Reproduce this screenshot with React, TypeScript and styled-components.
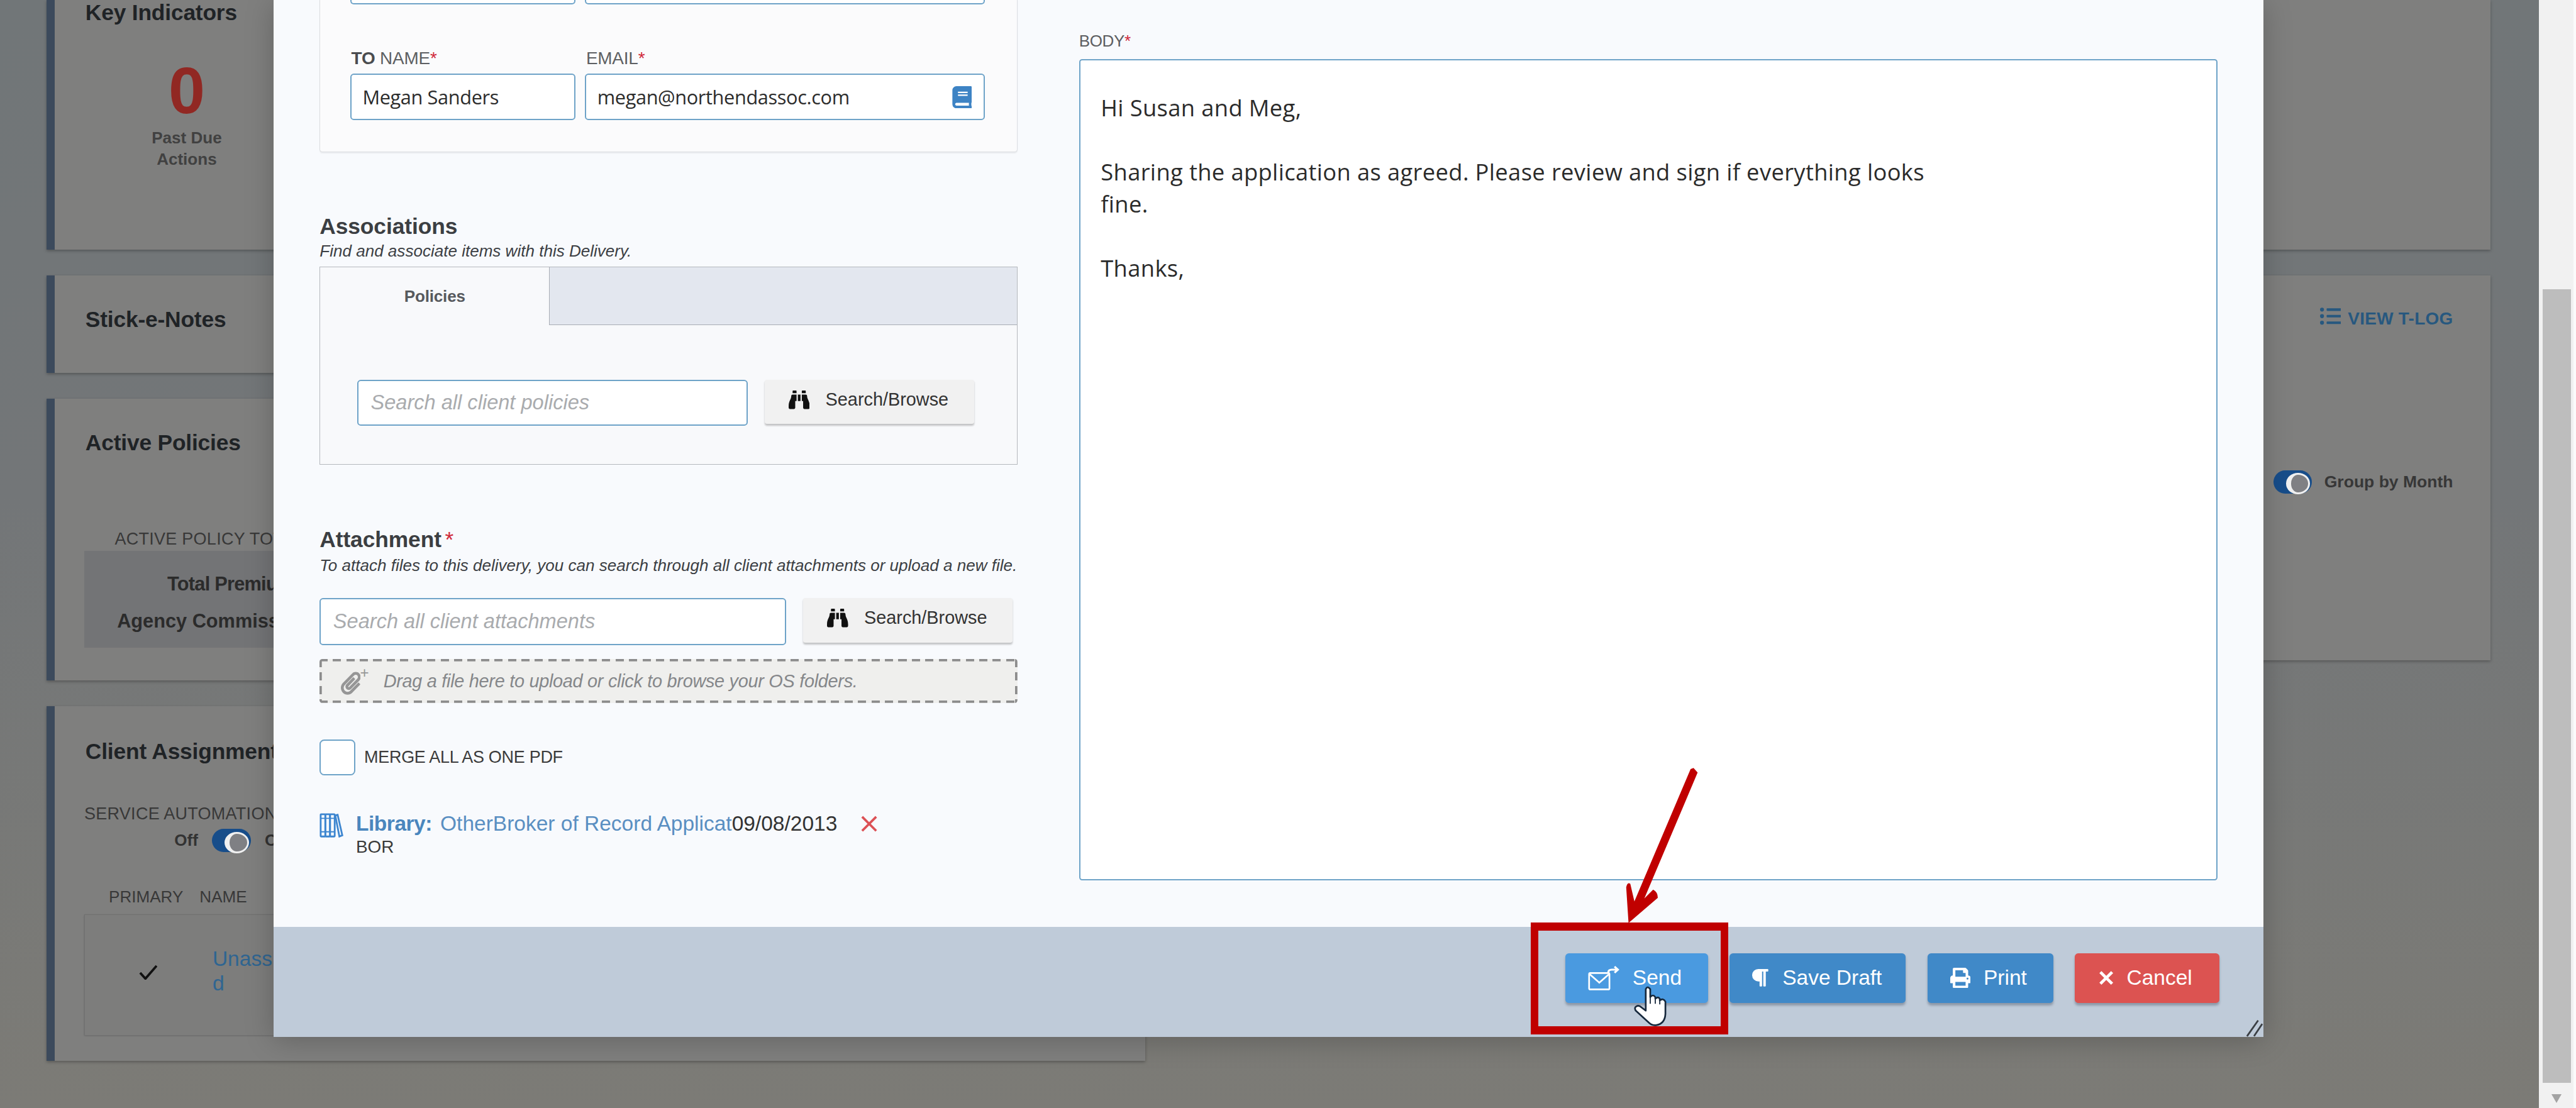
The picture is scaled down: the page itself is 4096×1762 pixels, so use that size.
import React from 'react'
import styled, { createGlobalStyle } from 'styled-components'
import { FaBinoculars, FaBook, FaListUl, FaParagraph, FaPaperclip, FaPrint } from 'react-icons/fa'

const GlobalStyle = createGlobalStyle`
  html, body { margin: 0; padding: 0; overflow: hidden; background: #7b7b77; }
  * { box-sizing: border-box; }
`

const SANS = `"Liberation Sans", Arial, sans-serif`
const BODY_FONT = `"Open Sans", "Noto Sans", sans-serif`
const DASH_X = `repeating-linear-gradient(90deg, #8c8c8c 0 14px, transparent 14px 23px)`
const DASH_Y = `repeating-linear-gradient(180deg, #8c8c8c 0 14px, transparent 14px 23px)`

const Screen = styled.div`
  zoom: 0.93091;
  width: 4400px;
  height: 1893px;
  display: flex;
  overflow: hidden;
  font-family: ${SANS};
`
const Page = styled.div`
  position: relative;
  width: 4337px;
  height: 100%;
  padding-left: 80px;
  display: flex;
  gap: 44px;
  align-items: flex-start;
  background: linear-gradient(180deg, #717678 0%, #737678 45%, #7c7b76 100%);
`
const Column = styled.div<{ $w: number }>`
  width: ${(p) => p.$w}px;
  display: flex;
  flex-direction: column;
  gap: 44px;
`
const Card = styled.section<{ $h: number; $accent?: boolean }>`
  height: ${(p) => p.$h}px;
  background: #7f7f7e;
  border-left: ${(p) => (p.$accent ? '14px solid #3c4a5c' : '0')};
  box-shadow: 0 2px 5px rgba(0, 0, 0, 0.28);
  padding-left: 50px;
  overflow: hidden;
`
const CardTitle = styled.h3<{ $top: number }>`
  margin: ${(p) => p.$top}px 0 0 2px;
  font-size: 38px;
  line-height: 44px;
  font-weight: 700;
  letter-spacing: -0.2px;
  color: #1f2326;
`
const Metric = styled.div`
  width: 250px;
  margin: 52px 0 0 50px;
  display: flex;
  flex-direction: column;
  align-items: center;
`
const MetricValue = styled.div`
  font-size: 112px;
  line-height: 120px;
  font-weight: 700;
  color: #912823;
`
const MetricLabel = styled.div`
  margin-top: 1px;
  font-size: 28px;
  line-height: 37px;
  font-weight: 700;
  text-align: center;
  color: #414141;
`
const MutedCaps = styled.div<{ $top: number; $left?: number }>`
  margin: ${(p) => p.$top}px 0 0 ${(p) => p.$left ?? 0}px;
  font-size: 29px;
  line-height: 34px;
  letter-spacing: 0.3px;
  color: #383838;
  white-space: nowrap;
`
const TotalsBox = styled.div`
  margin-top: 2px;
  width: 900px;
  height: 165px;
  padding: 26px 0 0 56px;
  background: #737476;
`
const TotalsLabel = styled.div`
  width: 330px;
  text-align: right;
  font-size: 33px;
  line-height: 63px;
  font-weight: 700;
  color: #2b2b2b;
  white-space: nowrap;
`
const TotalsTop = styled(TotalsLabel)`
  letter-spacing: -0.8px;
`
const ToggleRow = styled.div`
  margin: 8px 0 0 154px;
  display: flex;
  align-items: center;
  gap: 24px;
  font-size: 28px;
  font-weight: 700;
  color: #333;
`
const Toggle = styled.span`
  position: relative;
  display: inline-block;
  width: 66px;
  height: 40px;
  border-radius: 20px;
  background: #174d8a;

  &::after {
    content: '';
    position: absolute;
    right: 3px;
    top: 5px;
    width: 30px;
    height: 30px;
    border-radius: 50%;
    border: 4px solid #f0f0f0;
    border-left-width: 9px;
    background: #7f8084;
  }
`
const AssignHead = styled.div`
  margin: 60px 0 0 42px;
  display: flex;
  gap: 28px;
  font-size: 28px;
  line-height: 34px;
  letter-spacing: 0;
  color: #383838;
`
const AssignRow = styled.div`
  margin-top: 12px;
  width: 1200px;
  height: 207px;
  border: 1px solid #707070;
  background: #7d7d7c;
  box-shadow: 0 1px 3px rgba(0, 0, 0, 0.18);
  display: flex;
  align-items: flex-start;
`
const AssignCheck = styled.svg`
  width: 32px;
  height: 26px;
  margin: 85px 0 0 92px;
`
const AssignName = styled.div`
  width: 175px;
  margin: 54px 0 0 94px;
  font-size: 36px;
  line-height: 42px;
  color: #2f6591;
  word-break: break-all;
`
const RightTools = styled.div<{ $top: number }>`
  margin-top: ${(p) => p.$top}px;
  padding-right: 64px;
  display: flex;
  justify-content: flex-end;
  align-items: center;
`
const TLog = styled.span`
  display: flex;
  align-items: center;
  gap: 12px;
  font-size: 30px;
  font-weight: 700;
  letter-spacing: 0.3px;
  color: #27587f;

  svg {
    width: 36px;
    height: 36px;
    margin-top: -10px;
  }
`
const GroupToggle = styled.span`
  margin-left: 21px;
  font-size: 28.5px;
  font-weight: 700;
  color: #373737;
`
const Scrollbar = styled.aside`
  width: 63px;
  height: 100%;
  padding-left: 6px;
  border-right: 5px solid #fbfbfb;
  background: #f1f1f1;
  display: flex;
  flex-direction: column;
`
const ScrollThumb = styled.div`
  margin-top: 494px;
  width: 48px;
  height: 1356px;
  background: #bdbdbd;
`
const ScrollArrow = styled.div`
  margin: 19px 0 0 15px;
  width: 0;
  height: 0;
  border-left: 9px solid transparent;
  border-right: 9px solid transparent;
  border-top: 16px solid #a3a3a3;
`

const Modal = styled.div`
  position: absolute;
  left: 467px;
  top: 0;
  width: 3399px;
  height: 1771px;
  display: flex;
  flex-direction: column;
  background: #f8fafd;
  box-shadow: 0 6px 46px rgba(0, 0, 0, 0.22);
`
const ModalBody = styled.div`
  flex: 1;
  padding: 0 78px 0 79px;
  display: grid;
  grid-template-columns: 1192px 1945px;
  column-gap: 105px;
  overflow: hidden;
`
const LeftPane = styled.div`
  display: flex;
  flex-direction: column;
  align-items: flex-start;
`
const RecipientPanel = styled.div`
  width: 1192px;
  height: 260px;
  padding: 0 53px 0 51px;
  background: #fbfbfc;
  border: 2px solid #dcdee2;
  border-top: 0;
  border-radius: 0 0 5px 5px;
  box-shadow: 0 2px 2px rgba(0, 0, 0, 0.06);
`
const FieldRow = styled.div`
  display: grid;
  grid-template-columns: 385px 683px;
  column-gap: 16px;
`
const CroppedInput = styled.div`
  height: 8px;
  background: #fff;
  border: 3px solid #6ea3c8;
  border-top: 0;
  border-radius: 0 0 6px 6px;
`
const FieldLabel = styled.label`
  display: block;
  margin: 77px 0 10px 0;
  padding-left: 2px;
  font-size: 30px;
  line-height: 31px;
  letter-spacing: -0.2px;
  color: #5d5f62;

  b {
    color: #4a4c4f;
  }
  i {
    font-style: normal;
    color: #d0293b;
  }
`
const TextField = styled.div`
  position: relative;
  height: 79px;
  padding: 0 19px;
  display: flex;
  align-items: center;
  background: #fff;
  border: 3px solid #6ea3c8;
  border-radius: 6px;
  font-family: ${BODY_FONT};
  font-size: 33px;
  letter-spacing: -0.4px;
  color: #2c2c2c;
`
const BookIcon = styled(FaBook)`
  position: absolute;
  right: 20px;
  top: 19px;
  width: 34px;
  height: 38px;
  color: #3d83c4;
`
const SectionTitle = styled.h2<{ $top: number }>`
  margin: ${(p) => p.$top}px 0 0;
  font-size: 38px;
  line-height: 44px;
  font-weight: 700;
  letter-spacing: -0.1px;
  color: #3b3e42;

  i {
    margin-left: 6px;
    font-weight: 400;
    font-style: normal;
    color: #d0293b;
  }
`
const Hint = styled.p<{ $top: number }>`
  margin: ${(p) => p.$top}px 0 0;
  font-size: 28px;
  line-height: 30px;
  font-style: italic;
  color: #3c3f44;
  white-space: nowrap;
`
const TabBox = styled.div`
  margin-top: 11px;
  width: 1192px;
  height: 338px;
  background: #f8f9fb;
  border: 2px solid #b5b8bd;
`
const TabStrip = styled.div`
  height: 98px;
  display: flex;
  background: #e3e7ef;
`
const ActiveTab = styled.div`
  width: 391px;
  height: 98px;
  display: flex;
  align-items: center;
  justify-content: center;
  background: #f8f9fb;
  font-size: 28px;
  font-weight: 700;
  letter-spacing: -0.2px;
  color: #575a5e;
`
const TabEdge = styled.div`
  flex: 1;
  border-left: 2px solid #a9adb4;
  border-bottom: 2px solid #a9adb4;
`
const TabPanel = styled.div`
  padding: 94px 0 0 63px;
`
const SearchRow = styled.div<{ $top?: number }>`
  margin-top: ${(p) => p.$top ?? 0}px;
  display: flex;
  gap: 29px;
`
const SearchInput = styled.div<{ $w: number; $h: number }>`
  width: ${(p) => p.$w}px;
  height: ${(p) => p.$h}px;
  padding-left: 21px;
  display: flex;
  align-items: center;
  background: #fff;
  border: 3px solid #6ea3c8;
  border-radius: 6px;
  font-size: 35px;
  font-style: italic;
  color: #a9abae;
`
const BrowseButton = styled.button<{ $h: number }>`
  width: 358px;
  height: ${(p) => p.$h}px;
  padding: 0 0 8px 41px;
  display: flex;
  align-items: center;
  gap: 27px;
  border: 0;
  border-radius: 4px;
  background: #f1f1f1;
  box-shadow: 0 3px 3px rgba(0, 0, 0, 0.22);
  font-family: ${SANS};
  font-size: 31px;
  color: #333;

  svg {
    width: 36px;
    height: 36px;
    color: #111;
  }
`
const DropZone = styled.div`
  margin-top: 24px;
  width: 1192px;
  height: 75px;
  padding-left: 36px;
  display: flex;
  align-items: center;
  background-color: #efefed;
  background-image: ${DASH_X}, ${DASH_X}, ${DASH_Y}, ${DASH_Y};
  background-size: 100% 4px, 100% 4px, 4px 100%, 4px 100%;
  background-position: top, bottom, left, right;
  background-repeat: no-repeat;
  border-radius: 5px;
  font-size: 31px;
  font-style: italic;
  letter-spacing: -0.3px;
  color: #85878a;
`
const ClipIcon = styled.span`
  position: relative;
  width: 46px;
  height: 44px;
  margin-right: 27px;
  color: #969696;

  svg {
    width: 34px;
    height: 40px;
    margin-top: 6px;
  }
  i {
    position: absolute;
    left: 33px;
    top: -7px;
    font-size: 26px;
    font-style: normal;
  }
`
const MergeRow = styled.label`
  margin-top: 62px;
  display: flex;
  align-items: center;
  gap: 15px;
  font-size: 29px;
  letter-spacing: -0.3px;
  color: #3b3b3b;
`
const CheckBox = styled.span`
  width: 61px;
  height: 62px;
  background: #fff;
  border: 3px solid #6ea3c8;
  border-radius: 8px;
`
const FileRow = styled.div`
  margin-top: 62px;
  display: flex;
  gap: 22px;
`
const ShelfIcon = styled.svg`
  width: 40px;
  height: 42px;
  margin-top: 2px;
`
const FileText = styled.div`
  font-size: 36px;
  line-height: 40px;
  color: #333;
`
const FileLine = styled.div`
  display: flex;
  align-items: center;
`
const FileSource = styled.b`
  margin-right: 14px;
  letter-spacing: -0.5px;
  color: #4a86bd;
`
const FileName = styled.span`
  color: #5a8fc2;
`
const FileSub = styled.div`
  margin-top: 0;
  font-size: 30px;
  color: #3a3a3a;
`
const RemoveIcon = styled.svg`
  margin-left: 40px;
  width: 28px;
  height: 28px;
`
const RightPane = styled.div`
  padding-top: 56px;
`
const BodyLabel = styled.label`
  display: block;
  margin-bottom: 15px;
  font-size: 28px;
  line-height: 30px;
  letter-spacing: -0.4px;
  color: #5d5f62;

  i {
    font-style: normal;
    color: #d0293b;
  }
`
const BodyText = styled.div`
  height: 1403px;
  padding: 54px 35px;
  background: #fff;
  border: 3px solid #6ea3c8;
  border-radius: 5px;
  font-family: ${BODY_FONT};
  font-size: 39px;
  line-height: 54.7px;
  letter-spacing: 0.4px;
  white-space: pre-line;
  color: #2b2b2b;
`
const ModalFooter = styled.footer`
  position: relative;
  height: 188px;
  padding: 45px 75px 0 0;
  display: flex;
  justify-content: flex-end;
  align-items: flex-start;
  gap: 37px;
  background: #bfcbd9;
`
const ActionButton = styled.button<{ $w: number; $bg: string }>`
  width: ${(p) => p.$w}px;
  height: 85px;
  padding: 0 6px 0 0;
  display: flex;
  align-items: center;
  justify-content: center;
  gap: 22px;
  border: 0;
  border-radius: 6px;
  background: ${(p) => p.$bg};
  box-shadow: 0 4px 4px rgba(60, 70, 90, 0.38);
  font-family: ${SANS};
  font-size: 36px;
  color: #fff;

  svg {
    flex: none;
  }
`
const ResizeGrip = styled.svg`
  position: absolute;
  right: 0;
  bottom: 0;
  width: 30px;
  height: 32px;
`
const Annotation = styled.svg`
  position: absolute;
  left: 2760px;
  top: 1300px;
  width: 150px;
  height: 280px;
`
const RedFrame = styled.div`
  position: absolute;
  left: 2615px;
  top: 1576px;
  width: 337px;
  height: 191px;
  border: solid #c00000;
  border-width: 14px 13px;
`
const HandCursor = styled.svg`
  position: absolute;
  left: 2790px;
  top: 1682px;
  width: 58px;
  height: 71px;
`

const SendIcon = () => (
  <svg width="54" height="44" viewBox="0 0 56 44" fill="none" stroke="#fff" strokeWidth="3">
    <rect x="2" y="13" width="36" height="29" rx="2" />
    <path d="M3 15 L20 30 L37 15" />
    <path d="M36 12 Q36 7 42 7 L53 7 M47 1.5 L53 7 L47 12.5" strokeWidth="3.5" />
  </svg>
)

const CrossIcon = () => (
  <svg width="26" height="26" viewBox="0 0 26 26" fill="none" stroke="#fff" strokeWidth="5">
    <path d="M3 3 L23 23 M23 3 L3 23" />
  </svg>
)

const ShelfGlyph = () => (
  <ShelfIcon viewBox="0 0 40 42" fill="none" stroke="#3d86d0" strokeWidth="3">
    <rect x="2" y="2" width="8" height="38" rx="1" />
    <rect x="10" y="2" width="8" height="38" rx="1" />
    <rect x="18" y="2" width="8" height="38" rx="1" />
    <path d="M27 4 L31 3 L39 38 L34 40 Z" />
    <path d="M2 9 H26 M2 32 H26" strokeWidth="2" />
  </ShelfIcon>
)

export default function App() {
  return (
    <Screen>
      <GlobalStyle />
      <Page>
        <Column $w={1876}>
          <Card $h={427} $accent>
            <CardTitle $top={0}>Key Indicators</CardTitle>
            <Metric>
              <MetricValue>0</MetricValue>
              <MetricLabel>
                Past Due
                <br />
                Actions
              </MetricLabel>
            </Metric>
          </Card>
          <Card $h={166} $accent>
            <CardTitle $top={53}>Stick-e-Notes</CardTitle>
          </Card>
          <Card $h={481} $accent>
            <CardTitle $top={54}>Active Policies</CardTitle>
            <MutedCaps $top={126} $left={52}>
              ACTIVE POLICY TOTALS
            </MutedCaps>
            <TotalsBox>
              <TotalsTop>Total Premiums:</TotalsTop>
              <TotalsLabel>Agency Commission:</TotalsLabel>
            </TotalsBox>
          </Card>
          <Card $h={606} $accent>
            <CardTitle $top={56}>Client Assignments</CardTitle>
            <MutedCaps $top={68}>SERVICE AUTOMATION</MutedCaps>
            <ToggleRow>
              Off
              <Toggle />
              On
            </ToggleRow>
            <AssignHead>
              <span>PRIMARY</span>
              <span>NAME</span>
            </AssignHead>
            <AssignRow>
              <AssignCheck viewBox="0 0 32 26" fill="none" stroke="#111" strokeWidth="4">
                <path d="M2 14 L11 24 L30 2" />
              </AssignCheck>
              <AssignName>Unassigned</AssignName>
            </AssignRow>
          </Card>
        </Column>
        <Column $w={2254}>
          <Card $h={427} />
          <Card $h={657}>
            <RightTools $top={57}>
              <TLog>
                <FaListUl />
                VIEW T-LOG
              </TLog>
            </RightTools>
            <RightTools $top={241}>
              <Toggle />
              <GroupToggle>Group by Month</GroupToggle>
            </RightTools>
          </Card>
        </Column>

        <Modal>
          <ModalBody>
            <LeftPane>
              <RecipientPanel>
                <FieldRow>
                  <CroppedInput />
                  <CroppedInput />
                </FieldRow>
                <FieldRow>
                  <div>
                    <FieldLabel>
                      <b>TO</b> NAME<i>*</i>
                    </FieldLabel>
                    <TextField>Megan Sanders</TextField>
                  </div>
                  <div>
                    <FieldLabel>
                      EMAIL<i>*</i>
                    </FieldLabel>
                    <TextField>
                      megan@northendassoc.com
                      <BookIcon />
                    </TextField>
                  </div>
                </FieldRow>
              </RecipientPanel>

              <SectionTitle $top={105}>Associations</SectionTitle>
              <Hint $top={6}>Find and associate items with this Delivery.</Hint>
              <TabBox>
                <TabStrip>
                  <ActiveTab>Policies</ActiveTab>
                  <TabEdge />
                </TabStrip>
                <TabPanel>
                  <SearchRow>
                    <SearchInput $w={667} $h={78}>
                      Search all client policies
                    </SearchInput>
                    <BrowseButton $h={75}>
                      <FaBinoculars />
                      Search/Browse
                    </BrowseButton>
                  </SearchRow>
                </TabPanel>
              </TabBox>

              <SectionTitle $top={106}>
                Attachment<i>*</i>
              </SectionTitle>
              <Hint $top={8}>
                To attach files to this delivery, you can search through all client attachments or upload a new file.
              </Hint>
              <SearchRow $top={40}>
                <SearchInput $w={797} $h={80}>
                  Search all client attachments
                </SearchInput>
                <BrowseButton $h={76}>
                  <FaBinoculars />
                  Search/Browse
                </BrowseButton>
              </SearchRow>
              <DropZone>
                <ClipIcon>
                  <FaPaperclip />
                  <i>+</i>
                </ClipIcon>
                Drag a file here to upload or click to browse your OS folders.
              </DropZone>
              <MergeRow>
                <CheckBox />
                MERGE ALL AS ONE PDF
              </MergeRow>
              <FileRow>
                <ShelfGlyph />
                <FileText>
                  <FileLine>
                    <FileSource>Library:</FileSource>
                    <FileName>OtherBroker of Record Applicat</FileName>
                    <span>09/08/2013</span>
                    <RemoveIcon viewBox="0 0 28 28" fill="none" stroke="#dc5156" strokeWidth="4">
                      <path d="M2 2 L26 26 M26 2 L2 26" />
                    </RemoveIcon>
                  </FileLine>
                  <FileSub>BOR</FileSub>
                </FileText>
              </FileRow>
            </LeftPane>

            <RightPane>
              <BodyLabel>
                BODY<i>*</i>
              </BodyLabel>
              <BodyText>
                {`Hi Susan and Meg,

Sharing the application as agreed. Please review and sign if everything looks
fine.

Thanks,`}
              </BodyText>
            </RightPane>
          </ModalBody>
          <ModalFooter>
            <ActionButton $w={243} $bg="#4a9ae0">
              <SendIcon />
              Send
            </ActionButton>
            <ActionButton $w={301} $bg="#4089c8">
              <FaParagraph size={34} />
              Save Draft
            </ActionButton>
            <ActionButton $w={215} $bg="#4089c8">
              <FaPrint size={35} />
              Print
            </ActionButton>
            <ActionButton $w={247} $bg="#dc5351">
              <CrossIcon />
              Cancel
            </ActionButton>
            <ResizeGrip viewBox="0 0 30 32" fill="none" stroke="#3b3f44" strokeWidth="3">
              <path d="M2 31 L21 4 M14 31 L28 10" />
            </ResizeGrip>
          </ModalFooter>
        </Modal>

        <RedFrame />
        <Annotation viewBox="2760 1300 150 280">
          <path
            fill="#c00000"
            d="M2888 1314 L2893 1312 L2900 1320 L2809 1535 L2824 1520 Q2832 1524 2832 1534 L2782 1577 L2778 1516 Q2780 1506 2785 1510 L2792 1540 Z"
          />
        </Annotation>
        <HandCursor viewBox="-2 -2 60 74">
          <path
            d="M20 6 Q23 -1 28 6 L28 20 Q33 14 37 20 L37 23 Q42 18 45 23 L45 26 Q51 21 55 28 L55 50 Q54 68 38 70 Q30 71 24 64 L2 44 Q-1 38 4 36 Q8 34 12 38 L20 44 Z"
            fill="#fff"
            stroke="#16283c"
            strokeWidth="3"
            strokeLinejoin="round"
          />
          <path d="M28 20 L28 32 M37 22 L37 32 M45 26 L45 33" stroke="#16283c" strokeWidth="2" />
        </HandCursor>
      </Page>
      <Scrollbar>
        <ScrollThumb />
        <ScrollArrow />
      </Scrollbar>
    </Screen>
  )
}
